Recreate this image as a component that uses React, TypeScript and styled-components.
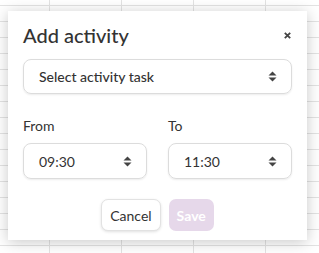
import styled, { createGlobalStyle } from "styled-components";

const GlobalStyle = createGlobalStyle`
  html, body {
    margin: 0;
    padding: 0;
    width: 319px;
    height: 253px;
    overflow: hidden;
  }
  body {
    font-family: Lato, "Open Sans", sans-serif;
    background-color: #ffffff;
    background-image:
      linear-gradient(to right, #e3e3e3 1px, transparent 1px),
      linear-gradient(to bottom, #e3e3e3 1px, transparent 1px);
    background-size: 72px 16px;
    background-position: 49px 5px;
  }
`;

const Page = styled.div`
  width: 319px;
  height: 253px;
  padding: 11px 12px 0 8px;
  box-sizing: border-box;
`;

const Modal = styled.div`
  width: 299px;
  height: 229px;
  box-sizing: border-box;
  background: #ffffff;
  box-shadow: 0 2px 14px rgba(0, 0, 0, 0.22);
  padding: 12px 15px 9px 15px;
  display: flex;
  flex-direction: column;
  color: #333333;
`;

const Header = styled.div`
  display: flex;
  align-items: center;
  justify-content: space-between;
  height: 24px;
`;

const Title = styled.h2`
  margin: 0;
  font-size: 20px;
  font-weight: 500;
  color: #333333;
`;

const Close = styled.button`
  border: none;
  background: none;
  padding: 0;
  width: 10px;
  height: 14px;
  display: flex;
  align-items: center;
  justify-content: center;
  cursor: pointer;
`;

const SelectBox = styled.div<{ $height: number }>`
  height: ${(p) => p.$height}px;
  box-sizing: border-box;
  border: 1px solid #dcdcdc;
  border-radius: 8px;
  box-shadow: 0 1px 2px rgba(0, 0, 0, 0.08);
  display: flex;
  align-items: center;
  justify-content: space-between;
  padding: 0 14px 0 15px;
  font-size: 14px;
  color: #333333;
`;

const TaskSelect = styled(SelectBox)`
  margin-top: 12px;
  font-weight: 500;
`;

const TimeRow = styled.div`
  margin-top: 24px;
  display: grid;
  grid-template-columns: 1fr 1fr;
  column-gap: 21px;
`;

const Field = styled.div`
  display: flex;
  flex-direction: column;
  gap: 9px;
`;

const Label = styled.label`
  font-size: 14px;
  color: #333333;
  line-height: 16px;
`;

const Actions = styled.div`
  margin-top: auto;
  display: flex;
  justify-content: center;
  gap: 8px;
`;

const Button = styled.button<{ $primary?: boolean }>`
  height: 32px;
  padding: 0 8px;
  border-radius: 7px;
  font-family: Lato, "Open Sans", sans-serif;
  font-size: 14px;
  font-weight: ${(p) => (p.$primary ? 700 : 400)};
  border: ${(p) => (p.$primary ? "none" : "1px solid #e2e2e2")};
  background: ${(p) => (p.$primary ? "#e6d8ea" : "#ffffff")};
  color: ${(p) => (p.$primary ? "#ffffff" : "#333333")};
  box-shadow: ${(p) => (p.$primary ? "none" : "0 1px 3px rgba(0,0,0,0.12)")};
  cursor: pointer;
`;

const SortIcon = () => (
  <svg width="9" height="11" viewBox="0 0 9 11">
    <path d="M4.5 0.5 L8.5 4.5 H0.5 Z" fill="#444" />
    <path d="M4.5 10.5 L8.5 6.5 H0.5 Z" fill="#444" />
  </svg>
);

const CloseIcon = () => (
  <svg width="7" height="7" viewBox="0 0 7 7">
    <path d="M0.8 0.8 L6.2 6.2 M6.2 0.8 L0.8 6.2" stroke="#444" strokeWidth="1.8" />
  </svg>
);

const App = () => {
  return (
    <>
      <GlobalStyle />
      <Page>
        <Modal>
          <Header>
            <Title>Add activity</Title>
            <Close aria-label="Close">
              <CloseIcon />
            </Close>
          </Header>
          <TaskSelect $height={35}>
            <span>Select activity task</span>
            <SortIcon />
          </TaskSelect>
          <TimeRow>
            <Field>
              <Label>From</Label>
              <SelectBox $height={36}>
                <span>09:30</span>
                <SortIcon />
              </SelectBox>
            </Field>
            <Field>
              <Label>To</Label>
              <SelectBox $height={36}>
                <span>11:30</span>
                <SortIcon />
              </SelectBox>
            </Field>
          </TimeRow>
          <Actions>
            <Button>Cancel</Button>
            <Button $primary>Save</Button>
          </Actions>
        </Modal>
      </Page>
    </>
  );
};

export default App;
